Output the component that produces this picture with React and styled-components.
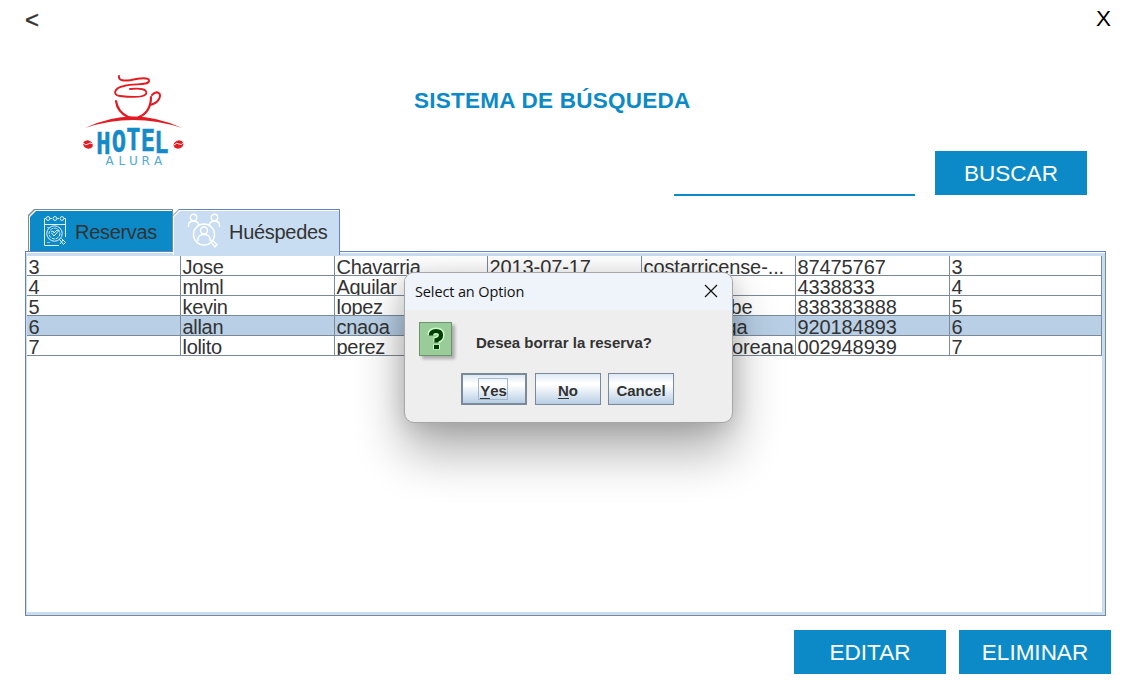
import React from "react";
import styled, { createGlobalStyle, css } from "styled-components";

const Global = createGlobalStyle`
  * { box-sizing: border-box; }
  body { margin: 0; background: #fff; overflow: hidden; }
  button { font: inherit; border: 0; padding: 0; border-radius: 0; }
`;

const blue = "#0c8ac7";
const pale = "#c8ddf2";
const line = "#7a8a99";

const Window = styled.main`
  position: relative;
  width: 1132px;
  height: 700px;
  display: flex;
  flex-direction: column;
  background: #fff;
  color: #333;
  font-family: "Liberation Sans", Arial, sans-serif;
  font-size: 20px;
  white-space: nowrap;
`;

const TopBar = styled.header`
  display: flex;
  justify-content: space-between;
  height: 40px;
  padding: 5px 21px 0 25px;
  font-size: 22.5px;
  line-height: 27px;
`;

const Back = styled.span`
  padding-top: 1px;
  font-size: 24px;
  -webkit-text-stroke: 0.4px #333;
`;

const Close = styled.span`
  color: #000;
`;

const Header = styled.section`
  display: flex;
  height: 169px;
  padding: 25px 45px 0 75px;
`;

const HeaderBody = styled.div`
  flex: 1;
  display: flex;
  flex-direction: column;
  padding: 23px 0 0 219px;
`;

const Title = styled.h1`
  margin: 0;
  color: ${blue};
  font-size: 22.5px;
  line-height: 26px;
  letter-spacing: 0.25px;
`;

const SearchRow = styled.div`
  display: flex;
  justify-content: flex-end;
  align-items: flex-end;
  gap: 20px;
  margin-top: 37px;
`;

const SearchInput = styled.input`
  width: 241px;
  height: 32px;
  margin-bottom: -1px;
  padding: 0;
  border: 0;
  border-bottom: 2px solid ${blue};
  outline: 0;
  background: transparent;
  font: inherit;
`;

const ActionButton = styled.button`
  width: 152px;
  height: 44px;
  padding-top: 1px;
  background: ${blue};
  color: #fff;
  font-size: 22.5px;
  line-height: 43px;
`;

const Tabs = styled.nav`
  display: flex;
  height: 42px;
  padding-left: 28px;
`;

const corner = css`
  clip-path: polygon(6px 0, 100% 0, 100% 100%, 0 100%, 0 6px);
`;

const Tab = styled.div`
  position: relative;
  z-index: 0;
  display: flex;
  align-items: center;
  gap: 8px;
  width: ${(p) => (p.$active ? 167 : 145)}px;
  height: ${(p) => (p.$active ? 46 : 42)}px;
  padding: ${(p) => (p.$active ? "0 0 2px 14px" : "2px 0 0 15px")};
  background: ${(p) => (p.$active ? "#6382bf" : line)};
  ${corner}
  &::before, &::after {
    content: "";
    position: absolute;
    z-index: -1;
    ${corner}
  }
  &::before {
    inset: 1px 1px 0 ${(p) => (p.$active ? 0 : 1)}px;
    background: #fff;
  }
  &::after {
    inset: 2px 1px 0 ${(p) => (p.$active ? 1 : 2)}px;
    background: ${(p) => (p.$active ? pale : blue)};
  }
`;

const TabLabel = styled.span`
  line-height: 24px;
  padding-top: 1px;
  letter-spacing: -0.3px;
`;

const Panel = styled.section`
  width: 1081px;
  height: 365px;
  margin-left: 25px;
  padding: 1px 0 0;
  border: 1px solid ${line};
  border-top-color: #6382bf;
  border-left-color: #6382bf;
`;

const TableFrame = styled.div`
  height: 362px;
  border: solid ${pale};
  border-width: 3px 3px 3px 1px;
`;

const Row = styled.div`
  display: grid;
  grid-template-columns: 154px 154px 153px 154px 154px 154px 152px;
  height: 20px;
  background: ${(p) => (p.$selected ? "#b8cfe5" : "#fff")};
`;

const Cell = styled.div`
  height: 20px;
  padding-left: ${(p) => (p.$indent || 1) + 0.5}px;
  overflow: hidden;
  border: solid ${line};
  border-width: 0 1px 1px 0;
  font-size: 20px;
  line-height: 22px;
  letter-spacing: ${(p) => (p.$numeric ? -0.1 : -0.3)}px;
`;

const Footer = styled.footer`
  display: flex;
  justify-content: flex-end;
  gap: 13px;
  padding: 14px 21px 0 0;
`;

const Dialog = styled.div`
  position: absolute;
  left: 404px;
  top: 272px;
  width: 329px;
  height: 151px;
  border: 1px solid #a6a6a6;
  border-radius: 10px;
  background: #eee;
  box-shadow: 0 28px 50px rgba(0, 0, 0, 0.33), 0 2px 22px rgba(0, 0, 0, 0.14);
`;

const DialogBar = styled.div`
  display: flex;
  align-items: center;
  justify-content: space-between;
  height: 37px;
  padding: 0 14px 1px 10px;
  border-radius: 9px 9px 0 0;
  background: #eff3fa;
  color: #111;
  font-family: "Open Sans", "Noto Sans", sans-serif;
  font-size: 14.5px;
`;

const DialogTitle = styled.span`
  letter-spacing: -0.12px;
`;

const Message = styled.div`
  display: flex;
  gap: 24px;
  padding: 12px 0 0 14px;
  font-size: 15px;
  font-weight: 700;
  line-height: 42px;
  height: 52px;
`;

const QuestionIcon = styled.div`
  width: 33px;
  height: 34px;
  border: 1px solid #6a946a;
  background: #99cc99;
  box-shadow: 3px 3px 3px rgba(0, 0, 0, 0.28);
`;

const Choices = styled.div`
  display: flex;
  padding: 11px 0 0 56px;
`;

const Choice = styled.button`
  display: flex;
  align-items: center;
  justify-content: center;
  width: 66px;
  height: 32px;
  margin-right: ${(p) => (p.$default ? 8 : 7)}px;
  padding-top: 2px;
  border: ${(p) => (p.$default ? 2 : 1)}px solid ${line};
  background: linear-gradient(#dde8f3 0%, #fff 30%, #fff 36%, #b8cfe5 100%);
  color: #333;
  font-size: 15px;
  font-weight: 700;
`;

const FocusRing = styled.span`
  height: 22px;
  margin: -2px 2px 0 0;
  padding: 0 0 0 1px;
  border: 1px solid #a3b8cc;
  line-height: 23px;
`;

const Mnemonic = styled.span`
  display: inline-block;
  height: 17px;
  border-bottom: 1px solid #333;
  line-height: 17px;
`;

function Logo() {
  return (
    <svg width="120" height="110" viewBox="0 0 120 110" fill="none">
      <g stroke="#e31b23" strokeLinecap="round">
        <path d="M44 11c-1 5 6 5 12 4 8-2 19-3 18 1-1 5-15 2-25 5-10 2-12 9-4 10 9 1 23 2 26-2 2-5-6-6-16-5" strokeWidth="1.9" />
        <path d="M41 36c1 8 6 13 12 16M76 32c0 10-5 17-12 20" strokeWidth="2.2" />
        <path d="M77 30c5-5 10-2 7 4-2 4-5 5-9 6" strokeWidth="2" />
      </g>
      <path d="M10 63Q58 40 107 63Q58 47 10 63Z" fill="#e31b23" />
      <path d="M49 52l5-1q5 2 11 0l5 2Z" fill="#e31b23" />
      <g fill="#e31b23">
        <ellipse cx="13" cy="79.500" rx="5" ry="4" transform="rotate(20 13 79.500)" />
        <ellipse cx="103.500" cy="79.500" rx="5" ry="4" transform="rotate(-20 103.500 79.500)" />
      </g>
      <path d="M8 78q3 3 5 1t5 0M99 80q3-3 5-1t5-2" stroke="#fff" strokeWidth=".9" />
      <text
        transform="scale(.78 1)"
        x="27.200 47 65.600 84.200 101.500"
        y="89 87 85.500 86.500 88"
        fill="#148bc8"
        stroke="#148bc8"
        strokeWidth=".5"
        fontFamily="DejaVu Sans Mono, Liberation Mono, monospace"
        fontWeight="700"
        fontSize="30.500"
      >
        HOTEL
      </text>
      <text
        x="30.500 43.500 54 66.500 79"
        y="99.500"
        fill="#50a8d5"
        fontFamily="DejaVu Sans, sans-serif"
        fontSize="12"
      >
        ALURA
      </text>
    </svg>
  );
}

function CalendarIcon() {
  return (
    <svg width="24" height="32" viewBox="0 0 24 32" fill="none" stroke="#e3f2fa" strokeWidth="1">
      <path d="M3 3.500H1.500v27H16M21 3.500h1.500V22M1.500 9.500h21M7 3.500h2M14 3.500h2" />
      <circle cx="5" cy="3.500" r="1.900" />
      <circle cx="12" cy="3.500" r="1.900" />
      <circle cx="19" cy="3.500" r="1.900" />
      <circle cx="11.500" cy="18.500" r="7.700" />
      <circle cx="11.500" cy="18.500" r="5.400" strokeDasharray="3 1" />
      <path d="m8.500 18 2.500 3 4.500-5M8 17l2-1 1 2 3-3 2 1M16.500 24.500l4 5 2-2-4-4M17 29l3-4" />
      <path d="M4 12.500h2M4 27.500h3" strokeOpacity=".6" />
    </svg>
  );
}

function GuestsIcon() {
  return (
    <svg width="34" height="36" viewBox="0 0 34 36" fill="none" stroke="#fff" strokeWidth="1.400">
      <circle cx="6.500" cy="4.500" r="3.200" />
      <path d="M1.500 14v-2c0-5 10-5 10 0v1" />
      <circle cx="27.500" cy="4.500" r="3.200" />
      <path d="M22.500 13v-1c0-5 10-5 10 0v2" />
      <circle cx="17" cy="21.500" r="10.500" />
      <circle cx="17" cy="17.500" r="3.500" />
      <path d="M11 28v-2c0-6 12-6 12 0v2M24 29l1.500-1.500 4.500 4-2 2.500-4-5" />
    </svg>
  );
}

const rows = [
  ["3", "Jose", "Chavarria", "2013-07-17", "costarricense-...", "87475767", "3"],
  ["4", "mlml", "Aguilar", "", "", "4338833", "4"],
  ["5", "kevin", "lopez", "", { text: "be", indent: 88 }, "838383888", "5"],
  ["6", "allan", "cnaoa", "", { text: "ga", indent: 83 }, "920184893", "6"],
  ["7", "lolito", "perez", "", { text: "oreana", indent: 89.5 }, "002948939", "7"],
];

export default function App() {
  return (
    <Window>
      <Global />
      <TopBar>
        <Back>&lt;</Back>
        <Close>X</Close>
      </TopBar>
      <Header>
        <Logo />
        <HeaderBody>
          <Title>SISTEMA DE BÚSQUEDA</Title>
          <SearchRow>
            <SearchInput aria-label="Buscar" />
            <ActionButton>BUSCAR</ActionButton>
          </SearchRow>
        </HeaderBody>
      </Header>
      <Tabs>
        <Tab>
          <CalendarIcon />
          <TabLabel>Reservas</TabLabel>
        </Tab>
        <Tab $active>
          <GuestsIcon />
          <TabLabel>Huéspedes</TabLabel>
        </Tab>
      </Tabs>
      <Panel>
        <TableFrame>
          {rows.map((row) => (
            <Row key={row[0]} $selected={row[0] === "6"}>
              {row.map((cell, i) => (
                <Cell key={i} $indent={cell.indent} $numeric={i > 2}>
                  {cell.text ?? cell}
                </Cell>
              ))}
            </Row>
          ))}
        </TableFrame>
      </Panel>
      <Footer>
        <ActionButton>EDITAR</ActionButton>
        <ActionButton>ELIMINAR</ActionButton>
      </Footer>
      <Dialog role="dialog">
        <DialogBar>
          <DialogTitle>Select an Option</DialogTitle>
          <svg width="14" height="14" viewBox="0 0 14 14" stroke="#111" strokeWidth="1.200">
            <path d="m1 1 12 12M13 1 1 13" />
          </svg>
        </DialogBar>
        <Message>
          <QuestionIcon>
            <svg width="31" height="32" viewBox="0 0 31 32" fill="none" display="block">
              <path d="M11 12q0-4 5-4t5 4-4 5v2M16.500 21.500v5" stroke="#ccffcc" strokeWidth="7" />
              <path d="M11 12.500q0-4.500 5-4.500t5 4-4.500 5v2.500" stroke="#003c00" strokeWidth="4.200" />
              <path d="M14 22h5v4h-5z" fill="#003c00" />
            </svg>
          </QuestionIcon>
          <span>Desea borrar la reserva?</span>
        </Message>
        <Choices>
          <Choice $default>
            <FocusRing><Mnemonic>Y</Mnemonic>es</FocusRing>
          </Choice>
          <Choice><span><Mnemonic>N</Mnemonic>o</span></Choice>
          <Choice>Cancel</Choice>
        </Choices>
      </Dialog>
    </Window>
  );
}
